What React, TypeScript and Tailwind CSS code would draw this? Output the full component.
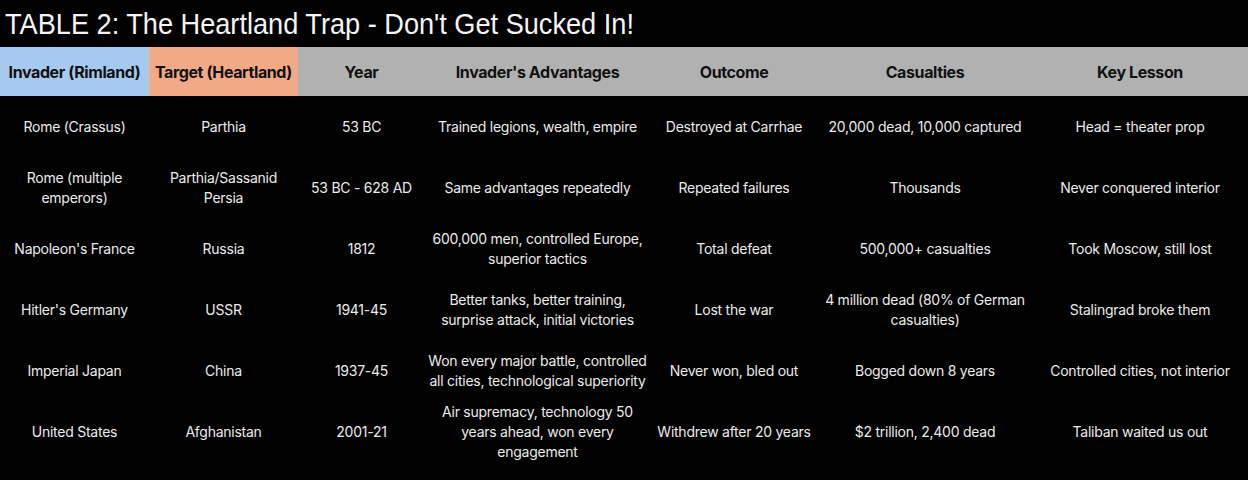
import React from 'react';

const rows = [
  ['Rome (Crassus)', 'Parthia', '53 BC', 'Trained legions, wealth, empire', 'Destroyed at Carrhae', '20,000 dead, 10,000 captured', 'Head = theater prop'],
  ['Rome (multiple emperors)', 'Parthia/Sassanid Persia', '53 BC - 628 AD', 'Same advantages repeatedly', 'Repeated failures', 'Thousands', 'Never conquered interior'],
  ["Napoleon's France", 'Russia', '1812', '600,000 men, controlled Europe, superior tactics', 'Total defeat', '500,000+ casualties', 'Took Moscow, still lost'],
  ["Hitler's Germany", 'USSR', '1941-45', 'Better tanks, better training, surprise attack, initial victories', 'Lost the war', '4 million dead (80% of German casualties)', 'Stalingrad broke them'],
  ['Imperial Japan', 'China', '1937-45', 'Won every major battle, controlled all cities, technological superiority', 'Never won, bled out', 'Bogged down 8 years', 'Controlled cities, not interior'],
  ['United States', 'Afghanistan', '2001-21', 'Air supremacy, technology 50 years ahead, won every engagement', 'Withdrew after 20 years', '$2 trillion, 2,400 dead', 'Taliban waited us out'],
];

const headers = [
  { label: 'Invader (Rimland)', bg: 'bg-[#a6c9ef]' },
  { label: 'Target (Heartland)', bg: 'bg-[#f2a985]' },
  { label: 'Year', bg: 'bg-[#b1b1b1]' },
  { label: "Invader's Advantages", bg: 'bg-[#b1b1b1]' },
  { label: 'Outcome', bg: 'bg-[#b1b1b1]' },
  { label: 'Casualties', bg: 'bg-[#b1b1b1]' },
  { label: 'Key Lesson', bg: 'bg-[#b1b1b1]' },
];

const grid = 'grid grid-cols-[149px_149px_127px_225px_168px_214px_1fr]';

export default function App() {
  return (
    <div className="w-[1248px] h-[480px] bg-black overflow-hidden font-['Inter',_'Liberation_Sans',_sans-serif] text-[#ececec]">
      {/* Title */}
      <div className="h-[47px] pl-[5px] pt-[5px]">
        <h1 className="origin-left scale-x-[0.905] whitespace-nowrap text-[30px] leading-[38px] text-[#f5f5f5] font-['Liberation_Sans',_sans-serif]">
          TABLE 2: The Heartland Trap - Don't Get Sucked In!
        </h1>
      </div>

      {/* Header row */}
      <div className={`${grid} h-[49px]`}>
        {headers.map((h) => (
          <div key={h.label} className={`${h.bg} flex items-center justify-center text-[16px] tracking-[-0.4px] font-bold text-[#111111] whitespace-nowrap`}>
            {h.label}
          </div>
        ))}
      </div>

      {/* Body rows */}
      {rows.map((row, i) => (
        <div key={i} className={`${grid} h-[61px]`}>
          {row.map((cell, j) => (
            <div key={j} className="flex items-center justify-center text-center text-[14px] leading-[20px] tracking-[-0.25px] px-[2px]">
              {cell}
            </div>
          ))}
        </div>
      ))}
    </div>
  );
}
